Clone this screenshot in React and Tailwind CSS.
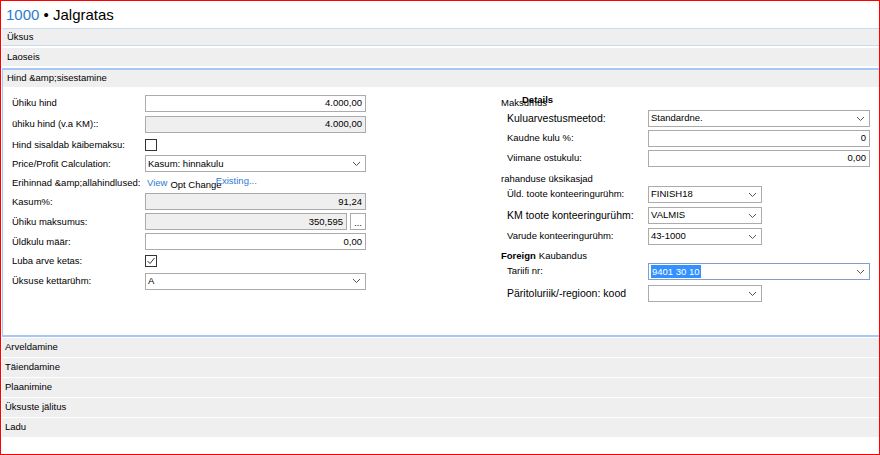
import React from 'react';

const Chevron = () => (
    <svg width="9" height="6" viewBox="0 0 9 6" className="shrink-0">
        <polyline points="1,1 4.5,4.5 8,1" fill="none" stroke="#555" strokeWidth="1" />
    </svg>
);

const TextBox = ({ value, gray, width = 'w-[221px]' }) => (
    <div
        className={`${width} h-[17px] border border-[#ababab] flex items-center justify-end pr-[3px] text-[9.5px] text-black ${gray ? 'bg-[#efefef]' : 'bg-white'}`}
    >
        {value}
    </div>
);

const Select = ({ value, width = 'w-[221px]', selected }) => (
    <div
        className={`${width} h-[17px] border flex items-center justify-between pl-[2px] pr-[4px] text-[9.5px] text-black bg-white ${selected ? 'border-[#7f9fcf]' : 'border-[#ababab]'}`}
    >
        {selected ? (
            <span className="bg-[#3390ff] text-white px-[1px] leading-[13px]">{value}</span>
        ) : (
            <span>{value}</span>
        )}
        <Chevron />
    </div>
);

const CheckBox = ({ checked }) => (
    <div className="w-[12px] h-[12px] border border-[#333] bg-white flex items-center justify-center">
        {checked && (
            <svg width="10" height="10" viewBox="0 0 10 10">
                <polyline points="1.5,5 4,7.5 8.5,2" fill="none" stroke="#333" strokeWidth="1" />
            </svg>
        )}
    </div>
);

const LeftRow = ({ label, mt, children }) => (
    <div className={`flex items-center ${mt}`}>
        <div className="w-[133px] text-[9.5px] text-black whitespace-nowrap">{label}</div>
        {children}
    </div>
);

const RightRow = ({ label, mt, big, children }) => (
    <div className={`flex items-center ${mt}`}>
        <div className={`w-[147px] pl-[6px] text-black whitespace-nowrap ${big ? 'text-[10.5px]' : 'text-[9.5px]'}`}>{label}</div>
        {children}
    </div>
);

const CollapsedRow = ({ title }) => (
    <div className="h-[19px] mb-[1px] bg-[#efefef] flex items-center pl-[3px] text-[9.5px] text-black">
        {title}
    </div>
);

const App = () => {
    return (
        <div
            className="w-[880px] h-[455px] border border-[#ff0000] bg-white overflow-hidden flex flex-col"
            style={{ fontFamily: '"Liberation Sans", Arial, sans-serif' }}
        >
            {/* Title */}
            <div className="h-[27px] flex items-center pl-[5px] text-[15px] leading-none">
                <span className="text-[#2b7bd4]">1000</span>
                <span className="text-black">&nbsp;• Jalgratas</span>
            </div>

            <div className="ml-[1px] flex flex-col">
                {/* Collapsed top sections */}
                <div className="border-t border-[#c7dbf1] border-b h-[18px] bg-[#efefef] flex items-center pl-[5px] text-[9.5px] text-black">
                    Üksus
                </div>
                <div className="mt-[2px] h-[18px] bg-[#efefef] flex items-center pl-[5px] text-[9.5px] text-black">
                    Laoseis
                </div>

                {/* Expanded section */}
                <div className="mt-[2px] border-l border-t-2 border-b-2 border-[#a7c7f4] h-[269px] flex flex-col">
                    <div className="h-[17px] bg-[#efefef] flex items-center pl-[4px] text-[9.5px] text-black">
                        {'Hind &amp;sisestamine'}
                    </div>

                    <div className="flex">
                        {/* Left column */}
                        <div className="w-[354px] ml-[9px] pt-[8px] flex flex-col">
                            <LeftRow label="Ühiku hind" mt="mt-0">
                                <TextBox value="4.000,00" />
                            </LeftRow>
                            <LeftRow label="ühiku hind (v.a KM)::" mt="mt-[4px]">
                                <TextBox value="4.000,00" gray />
                            </LeftRow>
                            <LeftRow label="Hind sisaldab käibemaksu:" mt="mt-[5px]">
                                <CheckBox />
                            </LeftRow>
                            <LeftRow label="Price/Profit Calculation:" mt="mt-[3px]">
                                <Select value="Kasum: hinnakulu" />
                            </LeftRow>
                            <div className="flex items-center h-[14px] mt-[4px] text-[9.5px] whitespace-nowrap">
                                <div className="w-[135px] text-black">{'Erihinnad &amp;allahindlused:'}</div>
                                <span className="text-[#2b7bd4]">View</span>
                                <span className="ml-[3px] text-black relative top-[2px]">Opt Change</span>
                                <span className="-ml-[6px] text-[#2b7bd4] relative -top-[2px]">Existing...</span>
                            </div>
                            <LeftRow label="Kasum%:" mt="mt-[3px]">
                                <TextBox value="91,24" gray />
                            </LeftRow>
                            <LeftRow label="Ühiku maksumus:" mt="mt-[3px]">
                                <TextBox value="350,595" gray width="w-[202px]" />
                                <div className="ml-[3px] w-[16px] h-[17px] border border-[#ababab] bg-white flex items-end justify-center text-[9px] leading-[12px] text-black">
                                    ...
                                </div>
                            </LeftRow>
                            <LeftRow label="Üldkulu määr:" mt="mt-[3px]">
                                <TextBox value="0,00" />
                            </LeftRow>
                            <LeftRow label="Luba arve ketas:" mt="mt-[4px]">
                                <CheckBox checked />
                            </LeftRow>
                            <LeftRow label="Üksuse kettarühm:" mt="mt-[4px]">
                                <Select value="A" />
                            </LeftRow>
                        </div>

                        {/* Right column */}
                        <div className="ml-[135px] pt-[9px] flex flex-col">
                            <div className="h-[14px] flex items-center text-[9.5px] text-black relative">
                                <span>Maksumus</span>
                                <span className="absolute left-[21px] -top-[3px] font-bold text-[9.5px]">Details</span>
                            </div>
                            <RightRow label="Kuluarvestusmeetod:" mt="mt-0" big>
                                <Select value="Standardne." width="w-[222px]" />
                            </RightRow>
                            <RightRow label="Kaudne kulu %:" mt="mt-[3px]">
                                <TextBox value="0" width="w-[222px]" />
                            </RightRow>
                            <RightRow label="Viimane ostukulu:" mt="mt-[3px]">
                                <TextBox value="0,00" width="w-[222px]" />
                            </RightRow>
                            <div className="h-[13px] mt-[6px] flex items-center text-[9.5px] text-black">
                                rahanduse üksikasjad
                            </div>
                            <RightRow label="Üld. toote konteeringurühm:" mt="mt-0">
                                <Select value="FINISH18" width="w-[114px]" />
                            </RightRow>
                            <RightRow label="KM toote konteeringurühm:" mt="mt-[4px]" big>
                                <Select value="VALMIS" width="w-[114px]" />
                            </RightRow>
                            <RightRow label="Varude konteeringurühm:" mt="mt-[4px]">
                                <Select value="43-1000" width="w-[114px]" />
                            </RightRow>
                            <div className="h-[14px] mt-[4px] flex items-center text-[9.5px] text-black">
                                <span className="font-bold">Foreign</span>
                                <span className="ml-[3px]">Kaubandus</span>
                            </div>
                            <RightRow label="Tariifi nr:" mt="mt-0">
                                <Select value="9401 30 10" width="w-[222px]" selected />
                            </RightRow>
                            <RightRow label="Päritoluriik/-regioon: kood" mt="mt-[5px]" big>
                                <Select value="" width="w-[114px]" />
                            </RightRow>
                        </div>
                    </div>
                </div>

                {/* Collapsed bottom sections */}
                <div className="mt-[1px] flex flex-col">
                    <CollapsedRow title="Arveldamine" />
                    <CollapsedRow title="Täiendamine" />
                    <CollapsedRow title="Plaanimine" />
                    <CollapsedRow title="Üksuste jälitus" />
                    <CollapsedRow title="Ladu" />
                </div>
            </div>
        </div>
    );
};

export default App;
